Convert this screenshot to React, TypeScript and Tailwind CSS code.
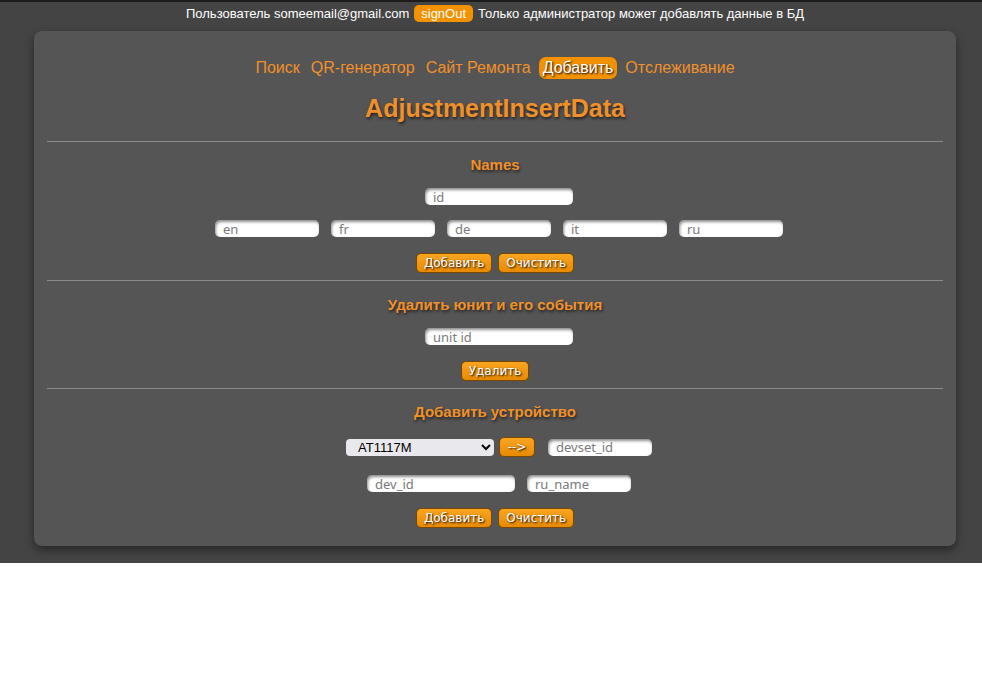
import React from 'react';

const navItems = ['Поиск', 'QR-генератор', 'Сайт Ремонта', 'Добавить', 'Отслеживание'];

const Field: React.FC<{ placeholder: string; wide?: boolean }> = ({ placeholder, wide }) => (
  <input
    placeholder={placeholder}
    className={`block ${wide ? 'w-[148px]' : 'w-[104px]'} h-[17px] rounded-[5px] bg-white px-[8px] text-[13px] leading-none text-gray-700 placeholder:text-[#7a7a7a] shadow-[inset_1px_2px_3px_rgba(0,0,0,0.45)] outline-none font-['Noto_Sans',sans-serif]`}
  />
);

const OrangeButton: React.FC<{ children: React.ReactNode; className?: string }> = ({ children, className = '' }) => (
  <button
    className={`block h-[20px] rounded-[5px] border border-[#7a4800] bg-gradient-to-b from-[#f9a520] to-[#e88a00] px-[7px] text-[12px] leading-none text-white [text-shadow:1px_1px_2px_#000] font-['DejaVu_Sans',sans-serif] ${className}`}
  >
    {children}
  </button>
);

const Heading: React.FC<{ children: React.ReactNode; className?: string }> = ({ children, className = '' }) => (
  <h2
    className={`text-[15px] leading-[17px] font-bold text-[#f0902a] [text-shadow:1px_2px_3px_rgba(0,0,0,0.6)] ${className}`}
  >
    {children}
  </h2>
);

const Divider = () => <div className="h-px bg-[#8a8a8a]" />;

export default function App() {
  return (
    <div className="bg-white min-h-[681px] font-['Liberation_Sans',Arial,sans-serif]">
      <div className="bg-[#444444] border-t-2 border-[#1c1c1c] pb-[17px]">
        {/* top bar */}
        <div className="flex items-center justify-center gap-[5px] h-[23px] pl-[8px] text-[13px] text-white">
          <span>Пользователь someemail@gmail.com</span>
          <button className="h-[17px] rounded-[5px] bg-[#f39200] px-[7px] text-[13px] leading-none text-white">
            signOut
          </button>
          <span>Только администратор может добавлять данные в БД</span>
        </div>

        {/* card */}
        <div className="ml-[34px] mr-[26px] mt-[6px] rounded-[8px] bg-[#555555] px-[13px] pt-[26px] pb-[18px] shadow-[0_4px_10px_rgba(0,0,0,0.45)]">
          <nav className="flex items-center justify-center gap-[11px] h-[22px] text-[16px]">
            {navItems.map((item) =>
              item === 'Добавить' ? (
                <span
                  key={item}
                  className="rounded-[7px] bg-[#f39200] px-[4px] leading-[22px] text-white [text-shadow:1px_1px_2px_#000] -mx-[3px]"
                >
                  {item}
                </span>
              ) : (
                <span key={item} className="text-[#f0902a]">
                  {item}
                </span>
              )
            )}
          </nav>

          <h1 className="mt-[15px] text-center text-[25px] leading-[28px] font-bold text-[#f0902a] [text-shadow:1px_2px_3px_rgba(0,0,0,0.6)]">
            AdjustmentInsertData
          </h1>

          <div className="mt-[19px]">
            <Divider />
          </div>

          {/* Names */}
          <div className="flex flex-col items-center">
            <Heading className="mt-[14px]">Names</Heading>
            <div className="mt-[15px] flex pl-[8px]">
              <Field placeholder="id" wide />
            </div>
            <div className="mt-[15px] flex gap-[12px] pl-[8px]">
              <Field placeholder="en" />
              <Field placeholder="fr" />
              <Field placeholder="de" />
              <Field placeholder="it" />
              <Field placeholder="ru" />
            </div>
            <div className="mt-[16px] mb-[7px] flex gap-[6px]">
              <OrangeButton>Добавить</OrangeButton>
              <OrangeButton>Очистить</OrangeButton>
            </div>
          </div>
          <Divider />

          {/* delete unit */}
          <div className="flex flex-col items-center">
            <Heading className="mt-[15px]">Удалить юнит и его события</Heading>
            <div className="mt-[15px] flex pl-[8px]">
              <Field placeholder="unit id" wide />
            </div>
            <div className="mt-[16px] mb-[7px] flex">
              <OrangeButton>Удалить</OrangeButton>
            </div>
          </div>
          <Divider />

          {/* add device */}
          <div className="flex flex-col items-center">
            <Heading className="mt-[14px]">Добавить устройство</Heading>
            <div className="mt-[17px] flex items-center pl-[8px]">
              <select className="block w-[148px] h-[17px] rounded-[4px] bg-[#e9e9ed] pl-[8px] text-[13px] leading-none text-black outline-none font-['Liberation_Sans',Arial,sans-serif]">
                <option>AT1117M</option>
              </select>
              <OrangeButton className="ml-[5px] w-[36px] px-0">--&gt;</OrangeButton>
              <div className="ml-[13px]">
                <Field placeholder="devset_id" />
              </div>
            </div>
            <div className="mt-[18px] flex gap-[12px] pl-[8px]">
              <Field placeholder="dev_id" wide />
              <Field placeholder="ru_name" />
            </div>
            <div className="mt-[16px] flex gap-[6px]">
              <OrangeButton>Добавить</OrangeButton>
              <OrangeButton>Очистить</OrangeButton>
            </div>
          </div>
        </div>
      </div>
    </div>
  );
}
